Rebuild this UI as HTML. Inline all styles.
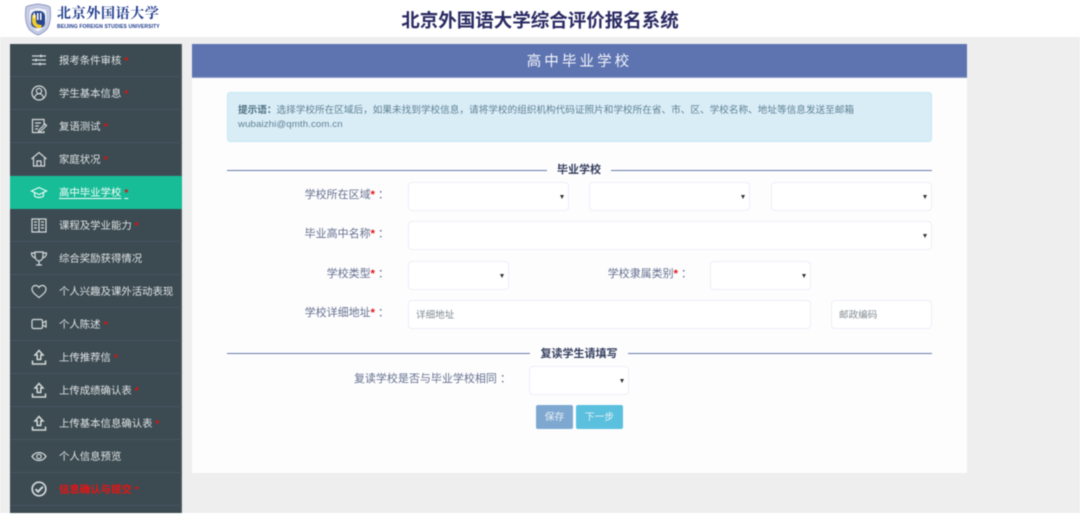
<!DOCTYPE html>
<html lang="zh-CN">
<head>
<meta charset="utf-8">
<title>北京外国语大学综合评价报名系统</title>
<style>
*{box-sizing:border-box}
html,body{margin:0;padding:0;width:1080px;height:521px;overflow:hidden;background:#fff}
body{font-family:"Liberation Sans","Noto Sans CJK SC",sans-serif;position:relative}
#wrap{position:absolute;left:0;top:0;width:1080px;height:521px;filter:blur(.4px)}
.abs{position:absolute;white-space:nowrap}
#top{left:0;top:0;width:1080px;height:37px;background:#fff}
#bg{left:0;top:37px;width:1080px;height:476px;background:#eee}
#title{left:380px;top:8px;width:320px;text-align:center;font-size:18.5px;line-height:25px;font-weight:700;color:#2a2a63}
#logotext{left:57px;top:5px;font-family:"Liberation Serif","Noto Serif CJK SC",serif;font-size:14px;line-height:20px;letter-spacing:.65px;color:#1d3a8c;font-weight:700}
#logosub{left:57px;top:24px;font-size:5px;line-height:7px;font-weight:700;color:#1d3a8c;letter-spacing:.12px}
#side{left:10px;top:44px;width:172px;height:469px;background:#3c4b52;border-right:1px solid #59666c}
.it{position:absolute;left:0;width:172px;height:33px;border-bottom:1px solid #445560}
.it .t{position:absolute;left:49px;top:10px;font-size:10.4px;line-height:15px;color:#dfe3e4;white-space:nowrap}
.it .t b{color:#e01010;font-weight:700;margin-left:3px;font-size:10px}
.it svg{position:absolute;left:18px;top:5px;width:22px;height:22px;fill:none;stroke:#d4d9da;stroke-width:1.2}
.it.on{background:#17bd97;border-bottom:0}
.it.on .t{color:#fff;text-decoration:underline;text-underline-offset:2px}
.it.on svg{stroke:#e6faf5}
.it.red .t{color:#ee1111;font-weight:700}
#main{left:192px;top:44px;width:775px;height:429px;background:#fdfdfe}
#head{left:192px;top:44px;width:775px;height:34px;background:#5e74b1;border-bottom:1px solid #8c9bc9;color:#f2f4fa;text-align:center;font-size:14.5px;line-height:37px;letter-spacing:3.1px}
#alert{left:227px;top:92px;width:705px;height:50px;background:#d9edf7;border:1px solid #c4e7f2;border-radius:3px;color:#5f8193;font-size:9.65px;line-height:14px;padding:11px 10px 0;white-space:normal}
#alert b{font-weight:700;color:#4d6f80}
#alert span{letter-spacing:.12px}
.ln{height:1px;background:#6b79ab}
.sec{font-size:11px;line-height:15px;font-weight:700;color:#333c5c;text-align:center}
.lb{font-size:11px;line-height:16px;color:#65708f;text-align:right}
.lb b{color:#e01010;font-weight:700}
.sel,.inp{position:absolute;background:#fff;border:1px solid #eceef8;border-radius:4px}
.sel:after{content:"";position:absolute;right:4px;top:50%;margin-top:-2px;border-left:2.5px solid transparent;border-right:2.5px solid transparent;border-top:4px solid #333}
.inp{font-size:9.6px;line-height:30px;color:#828a92;padding-left:7px;white-space:nowrap}
.btn{position:absolute;top:405px;height:24px;border-radius:2px;color:#e8f1f7;font-size:9.8px;line-height:25px;text-align:center}
</style>
</head>
<body>
<div id="wrap">
<div class="abs" id="top"></div>
<div class="abs" id="bg"></div>

<svg class="abs" style="left:24px;top:3px" width="28" height="33" viewBox="0 0 28 33">
<path d="M14 1C9 2 5 2 2 4C1 12 1 20 5 26C8 29 11 31 14 32C17 31 20 29 23 26C27 20 27 12 26 4C23 2 19 2 14 1Z" fill="#c7cee6" stroke="#8d9ac4" stroke-width="1"/>
<path d="M14 4.500C10 5.500 7.500 5.500 5.500 6.500C4.500 12 4.500 19 7.500 24C9 26 12 28 14 29C16 28 19 26 20.500 24C23.500 19 23.500 12 22.500 6.500C20.500 5.500 18 5.500 14 4.500Z" fill="#eef0f8" stroke="#aab4d4" stroke-width=".6"/>
<rect x="7" y="8" width="14" height="17" rx="5" fill="#28468f"/>
<path d="M8 12h4v6c0 3 3 4 6 4l-1 3c-5 1-9-3-9-7Z" fill="#f0cc2c"/>
<rect x="13" y="10" width="1.500" height="7" fill="#fff"/><rect x="16" y="10" width="1.500" height="7" fill="#fff"/><rect x="9.500" y="10" width="1.500" height="5" fill="#fff"/>
</svg>
<div class="abs" id="logotext">北京外国语大学</div>
<div class="abs" id="logosub">BEIJING FOREIGN STUDIES UNIVERSITY</div>
<div class="abs" id="title">北京外国语大学综合评价报名系统</div>

<div class="abs" id="side">
<div class="it" style="top:0"><svg viewBox="0 0 22 22"><path d="M4 7h14M4 11h14M4 15h14M13 5.500v3M8 9.500v3M12 13.500v3"/></svg><span class="t">报考条件审核<b>*</b></span></div>
<div class="it" style="top:33px"><svg viewBox="0 0 22 22"><circle cx="11" cy="11" r="7"/><circle cx="11" cy="9" r="2.600"/><path d="M6.500 16c.5-3 2.500-4.300 4.500-4.300s4 1.300 4.500 4.300"/></svg><span class="t">学生基本信息<b>*</b></span></div>
<div class="it" style="top:66px"><svg viewBox="0 0 22 22"><path d="M16 10V4.500H4.500v13H16V16M7 8h6M7 11h4M7 14h3M11 15l6-6 1.500 1.500-6 6-2 .5Z"/></svg><span class="t">复语测试<b>*</b></span></div>
<div class="it" style="top:99px"><svg viewBox="0 0 22 22"><path d="M3.500 11L11 4.500 18.500 11M5.500 10v8h11v-8M9 18v-5h4v5"/></svg><span class="t">家庭状况<b>*</b></span></div>
<div class="it on" style="top:132px"><svg viewBox="0 0 22 22"><path d="M3.500 10L11 6.500 18.500 10 11 13.500ZM6.500 11.500V15c1.500 2 7.500 2 9 0v-3.500"/></svg><span class="t">高中毕业学校<b>*</b></span></div>
<div class="it" style="top:165px"><svg viewBox="0 0 22 22"><path d="M4 5h14v13H4ZM11 5v13M6 8h3M6 11h3M6 14h3M13 8h3M13 11h3M13 14h3"/></svg><span class="t">课程及学业能力<b>*</b></span></div>
<div class="it" style="top:198px"><svg viewBox="0 0 22 22"><path d="M7 5h8v4c0 3-2 5-4 5s-4-2-4-5ZM7 6H3.500c0 3 1.500 4.500 4 5M15 6h3.500c0 3-1.500 4.500-4 5M11 14v3.500M8 18h6"/></svg><span class="t">综合奖励获得情况</span></div>
<div class="it" style="top:231px"><svg viewBox="0 0 22 22"><path d="M11 17.500C7 14.500 4 12 4 9c0-2 1.500-3.500 3.500-3.500 1.500 0 2.800 .8 3.500 2 .7-1.200 2-2 3.500-2C16.500 5.500 18 7 18 9c0 3-3 5.500-7 8.500Z"/></svg><span class="t">个人兴趣及课外活动表现</span></div>
<div class="it" style="top:264px"><svg viewBox="0 0 22 22"><rect x="4" y="6.500" width="10.500" height="9" rx="1.500"/><path d="M14.500 10l3.500-2v6l-3.500-2"/></svg><span class="t">个人陈述<b>*</b></span></div>
<div class="it" style="top:297px"><svg viewBox="0 0 22 22" style="stroke-width:1.500"><path d="M11 4.500L7 9H9.200v4.500h3.600V9H15ZM4.500 14.500V18h13v-3.500"/></svg><span class="t">上传推荐信<b>*</b></span></div>
<div class="it" style="top:330px"><svg viewBox="0 0 22 22" style="stroke-width:1.500"><path d="M11 4.500L7 9H9.200v4.500h3.600V9H15ZM4.500 14.500V18h13v-3.500"/></svg><span class="t">上传成绩确认表<b>*</b></span></div>
<div class="it" style="top:363px"><svg viewBox="0 0 22 22" style="stroke-width:1.500"><path d="M11 4.500L7 9H9.200v4.500h3.600V9H15ZM4.500 14.500V18h13v-3.500"/></svg><span class="t">上传基本信息确认表<b>*</b></span></div>
<div class="it" style="top:396px"><svg viewBox="0 0 22 22"><path d="M4 11.500C6 8.500 8.500 7.500 11 7.500s5 1 7 4c-2 3-4.500 4-7 4s-5-1-7-4Z"/><circle cx="11" cy="11.500" r="2.200"/></svg><span class="t">个人信息预览</span></div>
<div class="it red" style="top:429px"><svg viewBox="0 0 22 22" style="stroke-width:1.700"><circle cx="11" cy="11" r="6.800"/><path d="M7.500 11.200l2.600 2.500 4.800-5" style="stroke-width:2"/></svg><span class="t">信息确认与提交<b>*</b></span></div>
</div>

<div class="abs" id="main"></div>
<div class="abs" id="head">高中毕业学校</div>
<div class="abs" id="alert"><b>提示语：</b>选择学校所在区域后，如果未找到学校信息，请将学校的组织机构代码证照片和学校所在省、市、区、学校名称、地址等信息发送至邮箱<br><span>wubaizhi@qmth.com.cn</span></div>

<div class="abs ln" style="left:227px;top:170px;width:320px"></div>
<div class="abs sec" style="left:547px;top:163px;width:64px">毕业学校</div>
<div class="abs ln" style="left:611px;top:170px;width:321px"></div>

<div class="abs lb" style="left:273px;top:187px;width:116px">学校所在区域<b>*</b> ：</div>
<div class="sel" style="left:408px;top:182px;width:161px;height:29px"></div>
<div class="sel" style="left:589px;top:182px;width:161px;height:29px"></div>
<div class="sel" style="left:771px;top:182px;width:161px;height:29px"></div>

<div class="abs lb" style="left:273px;top:226px;width:116px">毕业高中名称<b>*</b> ：</div>
<div class="sel" style="left:408px;top:221px;width:524px;height:29px"></div>

<div class="abs lb" style="left:273px;top:266px;width:116px">学校类型<b>*</b> ：</div>
<div class="sel" style="left:408px;top:261px;width:101px;height:29px"></div>
<div class="abs lb" style="left:572px;top:266px;width:120px">学校隶属类别<b>*</b> ：</div>
<div class="sel" style="left:710px;top:261px;width:101px;height:29px"></div>

<div class="abs lb" style="left:273px;top:305px;width:116px">学校详细地址<b>*</b> ：</div>
<div class="inp" style="left:408px;top:300px;width:403px;height:29px">详细地址</div>
<div class="inp" style="left:831px;top:300px;width:101px;height:29px">邮政编码</div>

<div class="abs ln" style="left:227px;top:353px;width:303px"></div>
<div class="abs sec" style="left:530px;top:347px;width:98px">复读学生请填写</div>
<div class="abs ln" style="left:628px;top:353px;width:304px"></div>

<div class="abs lb" style="left:321px;top:371px;width:190px">复读学校是否与毕业学校相同 ：</div>
<div class="sel" style="left:529px;top:366px;width:100px;height:29px"></div>

<div class="btn" style="left:536px;width:37px;background:#7fa8d0">保存</div>
<div class="btn" style="left:576px;width:47px;background:#5bc0de">下一步</div>
</div>
</body>
</html>
